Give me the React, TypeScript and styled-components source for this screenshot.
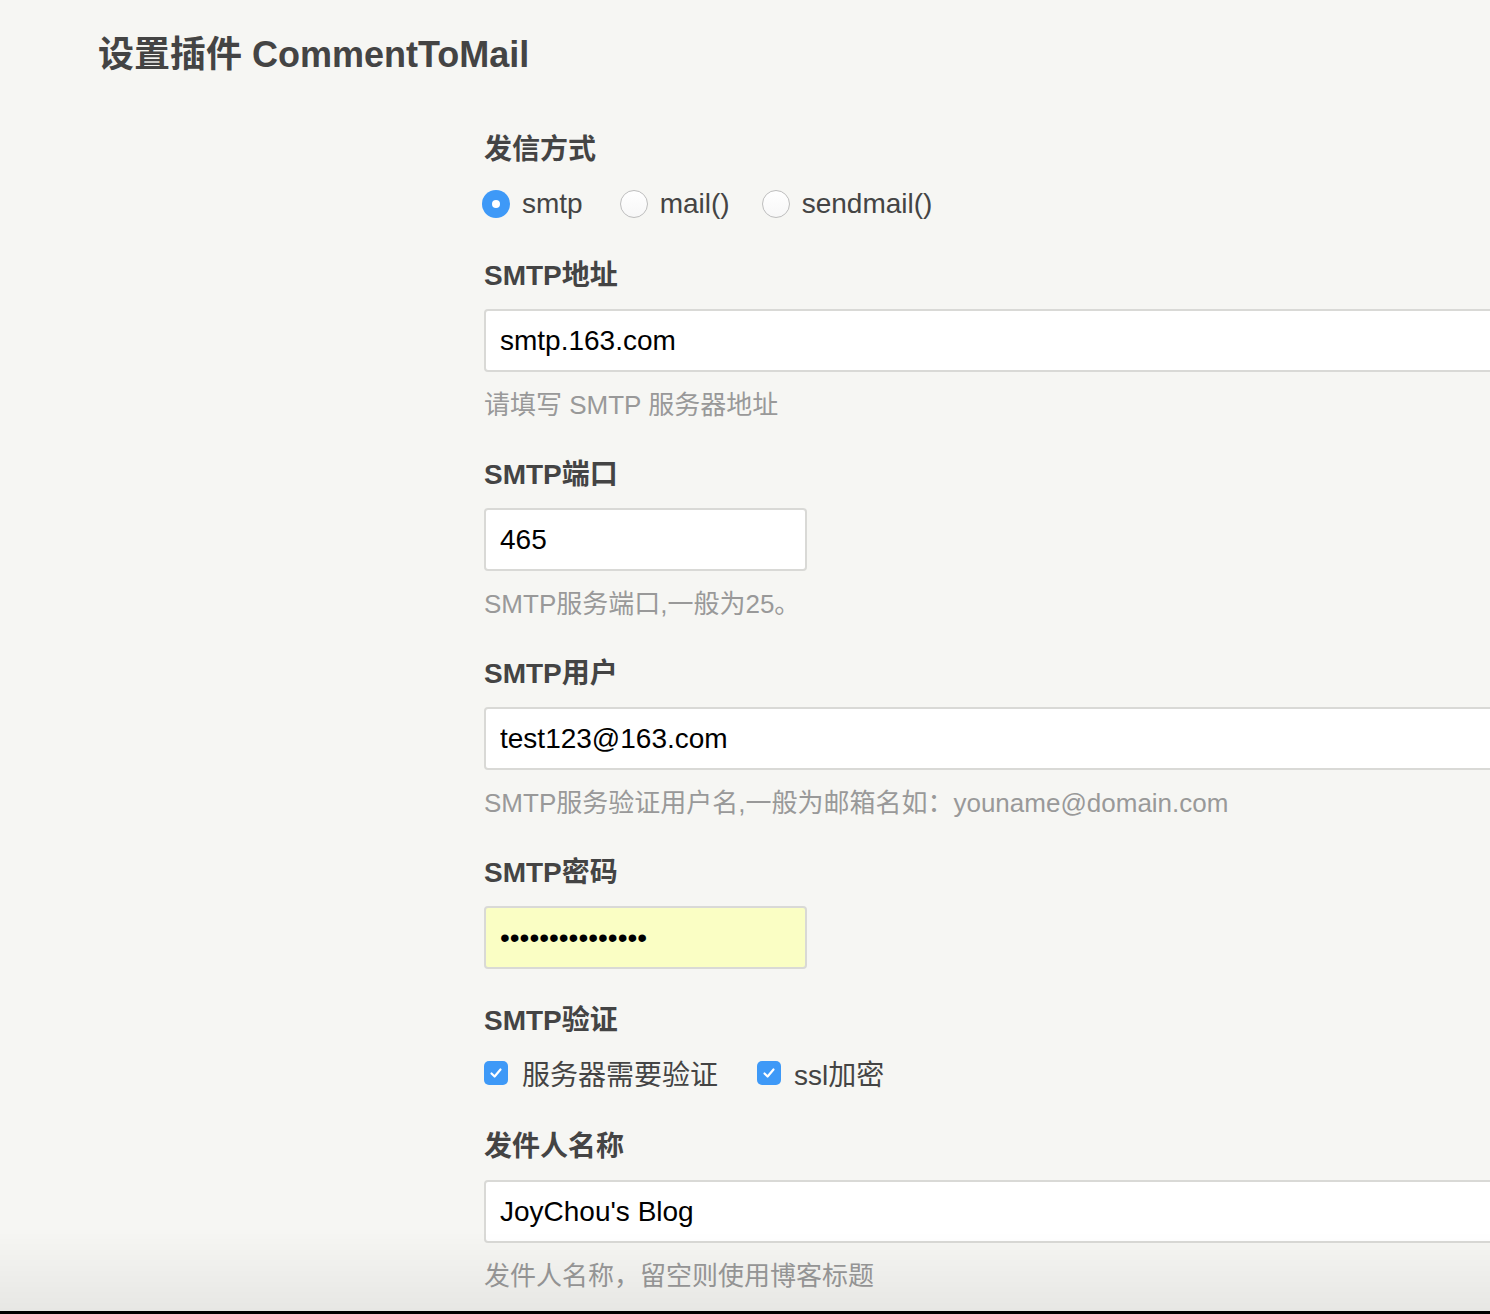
import styled, { createGlobalStyle } from 'styled-components';

const GlobalStyle = createGlobalStyle`
  html, body {
    margin: 0;
    padding: 0;
    overflow: hidden;
    background-color: #f6f6f3;
  }

  body {
    font-family: 'Liberation Sans', 'Noto Sans CJK SC', sans-serif;
    color: #444;
  }
`;

const Page = styled.main`
  min-height: 1314px;
  padding: 33px 0 0 98px;
  box-sizing: border-box;
`;

const PageTitle = styled.h2`
  margin: 0;
  font-size: 36px;
  line-height: 43px;
  font-weight: 700;
  color: #444;
`;

const SettingsForm = styled.form`
  display: flex;
  flex-direction: column;
  margin: 57px 0 0 386px;
`;

const Field = styled.section<{ $gap?: number }>`
  display: flex;
  flex-direction: column;
  margin-bottom: ${(p) => p.$gap ?? 37}px;
`;

const FieldLabel = styled.label`
  font-size: 28px;
  line-height: 34px;
  font-weight: 700;
  color: #444;
`;

const TextInput = styled.input<{ $short?: boolean; $autofill?: boolean }>`
  box-sizing: border-box;
  width: ${(p) => (p.$short ? '323px' : '1100px')};
  height: 63px;
  margin-top: 16px;
  padding: 0 14px;
  border: 2px solid #d9d9d6;
  border-radius: 4px;
  background-color: ${(p) => (p.$autofill ? '#fafec4' : '#fff')};
  font-family: 'Liberation Sans', 'Noto Sans CJK SC', sans-serif;
  font-size: 28px;
  color: #000;
  outline: none;
`;

const FieldHint = styled.p`
  margin: 17px 0 0;
  font-size: 26px;
  line-height: 32px;
  color: #999;
`;

const OptionRow = styled.div<{ $top: number }>`
  display: flex;
  align-items: center;
  height: 34px;
  margin-top: ${(p) => p.$top}px;
`;

const Option = styled.span<{ $gap: number; $space: number }>`
  display: inline-flex;
  align-items: center;
  gap: ${(p) => p.$gap}px;
  margin-right: ${(p) => p.$space}px;
  font-size: 28px;
  color: #444;
`;

const RadioMark = styled.span<{ $checked?: boolean }>`
  position: relative;
  box-sizing: border-box;
  width: 28px;
  height: 28px;
  margin-left: -2px;
  border-radius: 50%;
  border: ${(p) => (p.$checked ? 'none' : '1.5px solid #bdbdbd')};
  background: ${(p) => (p.$checked ? '#3e99f7' : 'linear-gradient(#fff, #f7f7f7)')};

  &::after {
    content: '';
    display: ${(p) => (p.$checked ? 'block' : 'none')};
    position: absolute;
    left: 10px;
    top: 10px;
    width: 8px;
    height: 8px;
    border-radius: 50%;
    background: #fff;
  }
`;

const CheckMark = styled.span`
  display: inline-flex;
  align-items: center;
  justify-content: center;
  width: 24px;
  height: 24px;
  border-radius: 5px;
  background-color: #3e99f7;
`;

const BottomShade = styled.div`
  position: fixed;
  left: 0;
  right: 0;
  bottom: 0;
  height: 80px;
  background: linear-gradient(rgba(0, 0, 0, 0), rgba(0, 0, 0, 0.06));
  border-bottom: 3px solid #000;
  pointer-events: none;
`;

const Tick = () => (
  <svg width="16" height="16" viewBox="0 0 16 16">
    <path d="M3.5 8.5 L6.6 11.5 L12.5 4.5" fill="none" stroke="#fff" strokeWidth="2.2" strokeLinecap="round" strokeLinejoin="round" />
  </svg>
);

const sendMethods = [
  { name: 'smtp', checked: true, space: 39 },
  { name: 'mail()', checked: false, space: 34 },
  { name: 'sendmail()', checked: false, space: 0 },
];

const App = () => {
  return (
    <Page>
      <GlobalStyle />
      <PageTitle>设置插件 CommentToMail</PageTitle>
      <SettingsForm>
        <Field $gap={38}>
          <FieldLabel>发信方式</FieldLabel>
          <OptionRow $top={20}>
            {sendMethods.map((m) => (
              <Option key={m.name} $gap={12} $space={m.space}>
                <RadioMark $checked={m.checked} />
                {m.name}
              </Option>
            ))}
          </OptionRow>
        </Field>

        <Field>
          <FieldLabel>SMTP地址</FieldLabel>
          <TextInput defaultValue="smtp.163.com" />
          <FieldHint>请填写 SMTP 服务器地址</FieldHint>
        </Field>

        <Field>
          <FieldLabel>SMTP端口</FieldLabel>
          <TextInput $short defaultValue="465" />
          <FieldHint>SMTP服务端口,一般为25。</FieldHint>
        </Field>

        <Field>
          <FieldLabel>SMTP用户</FieldLabel>
          <TextInput defaultValue="test123@163.com" />
          <FieldHint>SMTP服务验证用户名,一般为邮箱名如：youname@domain.com</FieldHint>
        </Field>

        <Field $gap={35}>
          <FieldLabel>SMTP密码</FieldLabel>
          <TextInput $short $autofill type="password" defaultValue="123456789012345" />
        </Field>

        <Field $gap={40}>
          <FieldLabel>SMTP验证</FieldLabel>
          <OptionRow $top={18}>
            <Option $gap={14} $space={39}>
              <CheckMark>
                <Tick />
              </CheckMark>
              服务器需要验证
            </Option>
            <Option $gap={13} $space={0}>
              <CheckMark>
                <Tick />
              </CheckMark>
              ssl加密
            </Option>
          </OptionRow>
        </Field>

        <Field>
          <FieldLabel>发件人名称</FieldLabel>
          <TextInput defaultValue="JoyChou's Blog" />
          <FieldHint>发件人名称，留空则使用博客标题</FieldHint>
        </Field>
      </SettingsForm>
      <BottomShade />
    </Page>
  );
};

export default App;
